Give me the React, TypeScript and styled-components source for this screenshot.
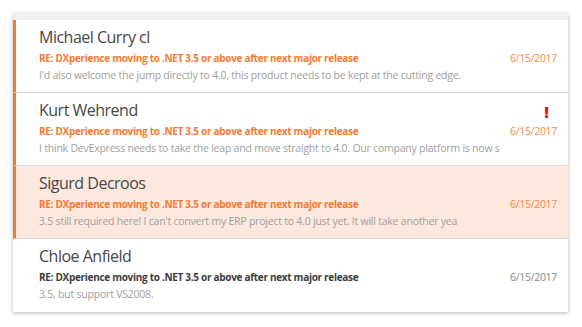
import React from "react";
import styled, { createGlobalStyle } from "styled-components";

const Global = createGlobalStyle`
  html, body { margin: 0; padding: 0; background: #fff; }
  body { font-family: "Open Sans", "Noto Sans", sans-serif; }
`;

const Page = styled.div`
  width: 582px;
  height: 327px;
  padding: 13px 14px 0 13px;
  box-sizing: border-box;
`;

const Card = styled.div`
  background: #fff;
  box-shadow: 0 1px 4px rgba(0, 0, 0, 0.28);
  display: flex;
  flex-direction: column;
`;

const HeaderStrip = styled.div`
  height: 7px;
  background: #efefef;
`;

const Row = styled.div<{ $unread: boolean; $selected: boolean; $last: boolean }>`
  height: 73px;
  box-sizing: border-box;
  border-left: 3px solid ${(p) => (p.$unread ? "#f47b34" : "transparent")};
  border-bottom: ${(p) => (p.$last ? "none" : "1px solid #d9d9d9")};
  background: ${(p) => (p.$selected ? "#fde8dd" : "#fff")};
  padding: 5px 11px 0 23px;
  display: grid;
  grid-template-columns: 1fr auto;
  grid-template-rows: 24px 16px 16px;
  row-gap: 1px;
`;

const Name = styled.div`
  font-size: 16px;
  letter-spacing: -0.5px;
  color: #474747;
  line-height: 24px;
  white-space: nowrap;
`;

const Flag = styled.div`
  font-size: 16px;
  font-weight: 800;
  color: #e8121a;
  line-height: 24px;
  padding-right: 8px;
  justify-self: end;
  align-self: end;
  transform: translateY(2px);
`;

const Subject = styled.div<{ $unread: boolean }>`
  font-size: 10px;
  letter-spacing: -0.3px;
  font-weight: 700;
  color: ${(p) => (p.$unread ? "#f47b34" : "#3c3c3c")};
  line-height: 16px;
  white-space: nowrap;
`;

const DateText = styled.div<{ $unread: boolean }>`
  font-size: 10.5px;
  letter-spacing: -0.3px;
  color: ${(p) => (p.$unread ? "#f58a4c" : "#8a8a8a")};
  line-height: 16px;
  text-align: right;
`;

const Preview = styled.div`
  grid-column: 1 / span 2;
  font-size: 10.5px;
  letter-spacing: -0.22px;
  color: #a0a0a0;
  line-height: 16px;
  white-space: nowrap;
  overflow: hidden;
`;

type Mail = {
  name: string;
  preview: string;
  unread: boolean;
  selected: boolean;
  flag: boolean;
};

const SUBJECT = "RE: DXperience moving to .NET 3.5 or above after next major release";

const mails: Mail[] = [
  {
    name: "Michael Curry cl",
    preview: "I'd also welcome the jump directly to 4.0, this product needs to be kept at the cutting edge.",
    unread: true,
    selected: false,
    flag: false,
  },
  {
    name: "Kurt Wehrend",
    preview: "I think DevExpress needs to take the leap and move straight to 4.0. Our company platform is now s",
    unread: true,
    selected: false,
    flag: true,
  },
  {
    name: "Sigurd Decroos",
    preview: "3.5 still required here! I can't convert my ERP project to 4.0 just yet. It will take another yea",
    unread: true,
    selected: true,
    flag: false,
  },
  {
    name: "Chloe Anfield",
    preview: "3.5, but support VS2008.",
    unread: false,
    selected: false,
    flag: false,
  },
];

export default function App() {
  return (
    <Page>
      <Global />
      <Card>
        <HeaderStrip />
        {mails.map((m, i) => (
          <Row key={m.name} $unread={m.unread} $selected={m.selected} $last={i === mails.length - 1}>
            <Name>{m.name}</Name>
            {m.flag ? <Flag>!</Flag> : <span />}
            <Subject $unread={m.unread}>{SUBJECT}</Subject>
            <DateText $unread={m.unread}>6/15/2017</DateText>
            <Preview>{m.preview}</Preview>
          </Row>
        ))}
      </Card>
    </Page>
  );
}
